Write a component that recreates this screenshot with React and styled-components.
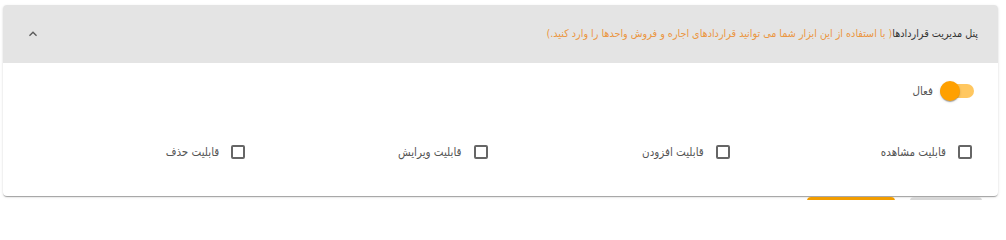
import React, { useState } from "react";
import styled, { createGlobalStyle } from "styled-components";

const GlobalStyle = createGlobalStyle`
  html, body {
    margin: 0;
    padding: 0;
    background: #fff;
    overflow: hidden;
  }
  body {
    font-family: "DejaVu Sans Condensed", "DejaVu Sans", "Noto Sans", sans-serif;
  }
`;

const permissions = [
  "قابلیت مشاهده",
  "قابلیت افزودن",
  "قابلیت ویرایش",
  "قابلیت حذف",
];

const App = () => {
  const [active, setActive] = useState(true);
  const [checked, setChecked] = useState(permissions.map(() => false));

  const toggle = (i) => {
    const arr = [...checked];
    arr[i] = !arr[i];
    setChecked(arr);
  };

  return (
    <Page>
      <GlobalStyle />
      <Card dir="rtl">
        <Summary>
          <Title>
            پنل مدیریت قراردادها
            <Hint>
              ( با استفاده از این ابزار شما می توانید قراردادهای اجاره و فروش
              واحدها را وارد کنید.)
            </Hint>
          </Title>
          <ExpandButton>
            <svg width="16" height="16" viewBox="0 0 24 24">
              <path
                d="M7.41 15.41 12 10.83l4.59 4.58L18 14l-6-6-6 6z"
                fill="rgba(0,0,0,0.6)"
              />
            </svg>
          </ExpandButton>
        </Summary>
        <Details>
          <SwitchRow>
            <SwitchLabel onClick={() => setActive(!active)}>
              <Track on={active}>
                <Thumb on={active} />
              </Track>
              <LabelText>فعال</LabelText>
            </SwitchLabel>
          </SwitchRow>
          <Grid>
            {permissions.map((p, i) => (
              <CheckItem key={p} onClick={() => toggle(i)}>
                <Box checked={checked[i]} />
                <LabelText>{p}</LabelText>
              </CheckItem>
            ))}
          </Grid>
        </Details>
      </Card>
      <Actions>
        <ActionButton primary={true} aria-label="ذخیره" />
        <ActionButton aria-label="انصراف" />
      </Actions>
    </Page>
  );
};

const Page = styled.div`
  height: 195px;
  overflow: hidden;
  padding: 5px 8px 0 3px;
`;

const Card = styled.div`
  background-color: #fff;
  border-radius: 4px;
  box-shadow: 0 2px 1px -1px rgba(0, 0, 0, 0.2), 0 1px 1px 0 rgba(0, 0, 0, 0.14),
    0 1px 3px 0 rgba(0, 0, 0, 0.12);
  overflow: hidden;
`;

const Summary = styled.div`
  background-color: #e4e4e4;
  display: flex;
  align-items: center;
  justify-content: space-between;
  height: 58px;
  padding: 0 20px 0 22px;
`;

const Title = styled.div`
  color: #333;
  font-size: 10.7px;
  margin-top: -2px;
`;

const Hint = styled.span`
  color: #eb9642;
`;

const ExpandButton = styled.div`
  display: flex;
  align-items: center;
  justify-content: center;
  width: 16px;
  height: 16px;
`;

const Details = styled.div`
  height: 133px;
  padding: 0 13px;
`;

const SwitchRow = styled.div`
  display: flex;
  padding-top: 17px;
  height: 21px;
`;

const SwitchLabel = styled.label`
  display: flex;
  align-items: center;
  gap: 7px;
  cursor: pointer;
`;

const Track = styled.span`
  position: relative;
  display: block;
  width: 34px;
  height: 14px;
  border-radius: 7px;
  margin-right: 11px;
  background-color: ${(props) => (props.on ? "#ffc760" : "#bdbdbd")};
`;

const Thumb = styled.span`
  position: absolute;
  top: -3px;
  right: ${(props) => (props.on ? "14px" : "0")};
  width: 20px;
  height: 20px;
  border-radius: 50%;
  background-color: ${(props) => (props.on ? "#ffa000" : "#fafafa")};
  box-shadow: 0 2px 1px -1px rgba(0, 0, 0, 0.2), 0 1px 1px 0 rgba(0, 0, 0, 0.14),
    0 1px 3px 0 rgba(0, 0, 0, 0.12);
`;

const LabelText = styled.span`
  color: #555;
  font-size: 11.5px;
`;

const Grid = styled.div`
  display: grid;
  grid-template-columns: repeat(4, 1fr);
  margin-top: 44px;
`;

const CheckItem = styled.label`
  display: flex;
  align-items: center;
  gap: 12px;
  padding-right: 13px;
  cursor: pointer;
`;

const Box = styled.span`
  display: block;
  box-sizing: border-box;
  width: 14px;
  height: 14px;
  border: 2px solid ${(props) => (props.checked ? "#ffa000" : "#666")};
  background-color: ${(props) => (props.checked ? "#ffa000" : "transparent")};
  border-radius: 2px;
`;

const Actions = styled.div`
  display: flex;
  justify-content: flex-end;
  gap: 15px;
  margin-top: 1px;
  padding-right: 16px;
`;

const ActionButton = styled.button`
  border: none;
  padding: 0;
  background-color: ${(props) => (props.primary ? "#f29d00" : "#d7d7d7")};
  border-radius: 4px;
  height: 36px;
  width: ${(props) => (props.primary ? "88px" : "72px")};
  box-shadow: 0 3px 1px -2px rgba(0, 0, 0, 0.2), 0 2px 2px 0 rgba(0, 0, 0, 0.14);
`;

export default App;
